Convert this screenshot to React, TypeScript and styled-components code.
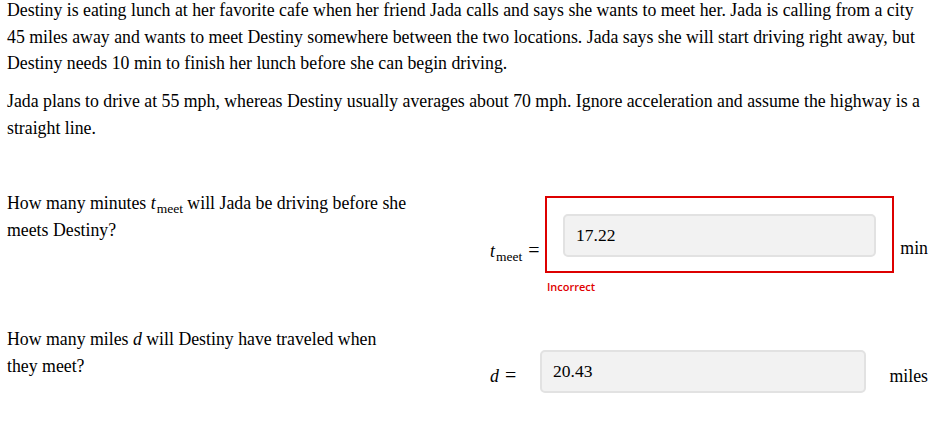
import React from 'react'
import styled, { createGlobalStyle } from 'styled-components'

const GlobalStyle = createGlobalStyle`
  html, body {
    margin: 0;
    padding: 0;
    background: #fff;
  }
  body {
    font-family: "Liberation Serif", "Times New Roman", serif;
    font-size: 17.8px;
    color: #000;
  }
`

type AnswerProps = {
  label: React.ReactNode;
  value: string;
  unit: string;
  unitWidth: number;
  drop: number;
  unitDrop: number;
  incorrect?: boolean;
}

export default function App(): React.ReactElement {
  return (
    <>
      <GlobalStyle />
      <Page>
        <Para>
          Destiny is eating lunch at her favorite cafe when her friend Jada calls and says she wants to meet her. Jada is calling from a city
          45 miles away and wants to meet Destiny somewhere between the two locations. Jada says she will start driving right away, but
          Destiny needs 10 min to finish her lunch before she can begin driving.
        </Para>
        <Para>
          Jada plans to drive at 55 mph, whereas Destiny usually averages about 70 mph. Ignore acceleration and assume the highway is a
          straight line.
        </Para>

        <QuestionRow top={49}>
          <Question>
            How many minutes <Var>t</Var><Sub>meet</Sub> will Jada be driving before she meets Destiny?
          </Question>
          <Answer
            label={<><Var>t</Var><Sub>meet</Sub><Eq>=</Eq></>}
            value="17.22"
            unit="min"
            unitWidth={34}
            drop={16}
            unitDrop={13}
            incorrect
          />
        </QuestionRow>

        <QuestionRow top={32}>
          <Question>
            How many miles <Var>d</Var> will Destiny have traveled when they meet?
          </Question>
          <Answer
            label={<><Var>d</Var><Eq>=</Eq></>}
            value="20.43"
            unit="miles"
            unitWidth={62}
            drop={4}
            unitDrop={4}
          />
        </QuestionRow>
      </Page>
    </>
  )
}

function Answer({ label, value, unit, unitWidth, drop, unitDrop, incorrect }: AnswerProps): React.ReactElement {
  return (
    <AnswerGrid unitWidth={unitWidth} offset={incorrect ? 6 : 24}>
      <Side drop={drop}>{label}</Side>
      <Field incorrect={incorrect}>
        <NumberInput defaultValue={value} />
      </Field>
      <Unit drop={unitDrop}>{unit}</Unit>
      {incorrect && <Note>Incorrect</Note>}
    </AnswerGrid>
  )
}

const Page = styled.div`
  padding: 0 6px 0 7px;
  margin-top: -3px;
`
const Para = styled.p`
  margin: 0 0 11.5px;
  line-height: 26.5px;
`
const QuestionRow = styled.div<{ top: number }>`
  display: flex;
  align-items: flex-start;
  margin-top: ${({ top }) => top}px;
`
const Question = styled.div`
  width: 402px;
  margin-right: 81px;
  flex: none;
  line-height: 26.5px;
`
const Var = styled.i`
  font-style: italic;
`
const Sub = styled.span`
  display: inline-block;
  font-size: 13.5px;
  line-height: 1;
  vertical-align: -4px;
  margin-left: 1px;
`
const Eq = styled.span`
  margin-left: 6px;
  font-size: 20px;
`
const AnswerGrid = styled.div<{ unitWidth: number; offset: number }>`
  flex: 1;
  display: grid;
  grid-template-columns: 50px 1fr ${({ unitWidth }) => unitWidth}px;
  align-items: center;
  margin-top: ${({ offset }) => offset}px;
`
const Side = styled.div<{ drop: number }>`
  padding-top: ${({ drop }) => drop * 2}px;
  line-height: 26px;
  white-space: nowrap;
`
const Unit = styled(Side)`
  text-align: right;
`
const Field = styled.div<{ incorrect?: boolean }>`
  margin-left: ${({ incorrect }) => (incorrect ? 5 : 0)}px;
  padding: ${({ incorrect }) => (incorrect ? '16px 16px 14px' : '0')};
  border: ${({ incorrect }) => (incorrect ? '2px solid #dd0000' : 'none')};
`
const NumberInput = styled.input`
  display: block;
  box-sizing: border-box;
  width: 100%;
  height: 43px;
  padding: 0 11px;
  margin: 0;
  border: 2px solid #e2e2e2;
  border-radius: 5px;
  background: #f2f2f2;
  font-family: "Liberation Serif", "Times New Roman", serif;
  font-size: 17.5px;
  color: #000;
  outline: none;
`
const Note = styled.div`
  grid-column: 2;
  margin: 7px 0 0 7px;
  font-family: "Open Sans", "Liberation Sans", sans-serif;
  font-size: 11px;
  font-weight: 600;
  line-height: 14px;
  color: #e00000;
`
